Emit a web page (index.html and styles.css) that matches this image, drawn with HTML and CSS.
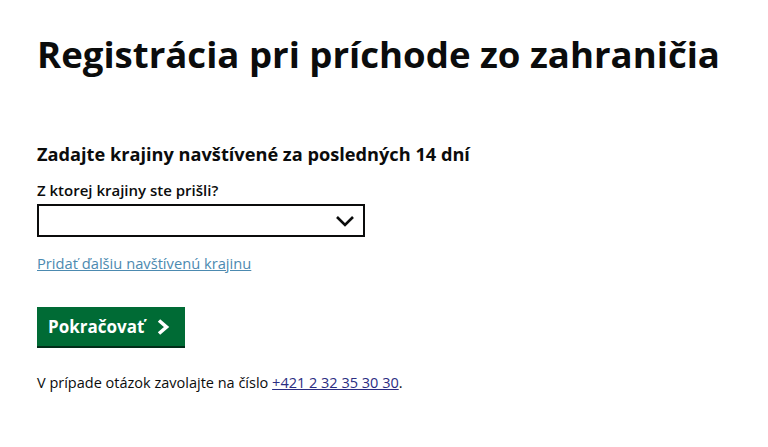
FILE: index.html
```html
<!DOCTYPE html>
<html lang="sk">
<head>
<meta charset="utf-8">
<title>Registrácia pri príchode zo zahraničia</title>
<link rel="stylesheet" href="styles.css">
</head>
<body>
<main class="page">
  <h1 class="title">Registrácia pri príchode zo zahraničia</h1>
  <h2 class="subtitle">Zadajte krajiny navštívené za posledných 14 dní</h2>
  <label class="label" for="country">Z ktorej krajiny ste prišli?</label>
  <div class="select" id="country">
    <svg class="chevron" width="20" height="12" viewBox="0 0 20 12"><path d="M2 2 L10 10 L18 2" fill="none" stroke="#0b0c0c" stroke-width="2.6"/></svg>
  </div>
  <a class="add-link" href="#">Pridať ďalšiu navštívenú krajinu</a>
  <button class="btn" type="button">Pokračovať
    <svg class="btn-icon" width="14" height="18" viewBox="0 0 14 18"><path d="M3 2.5 L10.5 9 L3 15.5" fill="none" stroke="#fff" stroke-width="3.6"/></svg>
  </button>
  <p class="help">V prípade otázok zavolajte na číslo <a class="phone" href="#">+421 2 32 35 30 30</a>.</p>
</main>
</body>
</html>
```

FILE: styles.css
```css
html, body {
  margin: 0;
  padding: 0;
  background: #fff;
}
body {
  font-family: "Open Sans", sans-serif;
  color: #0b0c0c;
}
.page {
  padding: 30px 0 0 37px;
  display: flex;
  flex-direction: column;
  align-items: flex-start;
}
.title {
  margin: 0;
  font-size: 36.6px;
  line-height: 48px;
  font-weight: 700;
}
.subtitle {
  margin: 64px 0 0 0;
  font-size: 18.2px;
  line-height: 24px;
  font-weight: 700;
}
.label {
  margin-top: 14px;
  font-size: 15px;
  line-height: 20px;
  font-weight: 600;
}
.select {
  margin-top: 4px;
  box-sizing: border-box;
  width: 328px;
  height: 33px;
  border: 2px solid #0b0c0c;
  display: flex;
  align-items: center;
  justify-content: flex-end;
  padding-right: 8px;
}
.add-link {
  margin-top: 16px;
  font-size: 14.7px;
  line-height: 20px;
  color: #4c8ab0;
  text-decoration: underline;
}
.btn {
  margin-top: 34px;
  width: 148px;
  height: 39px;
  background: #006b35;
  border: 0;
  box-shadow: 0 2px 0 #002d18;
  color: #fff;
  font-family: inherit;
  font-size: 17px;
  font-weight: 700;
  display: flex;
  align-items: center;
  justify-content: flex-start;
  gap: 12px;
  padding: 0 0 0 11px;
}
.help {
  margin: 27px 0 0 0;
  font-size: 14.5px;
  line-height: 20px;
}
.phone {
  color: #2b2d82;
  text-decoration: underline;
}
```
